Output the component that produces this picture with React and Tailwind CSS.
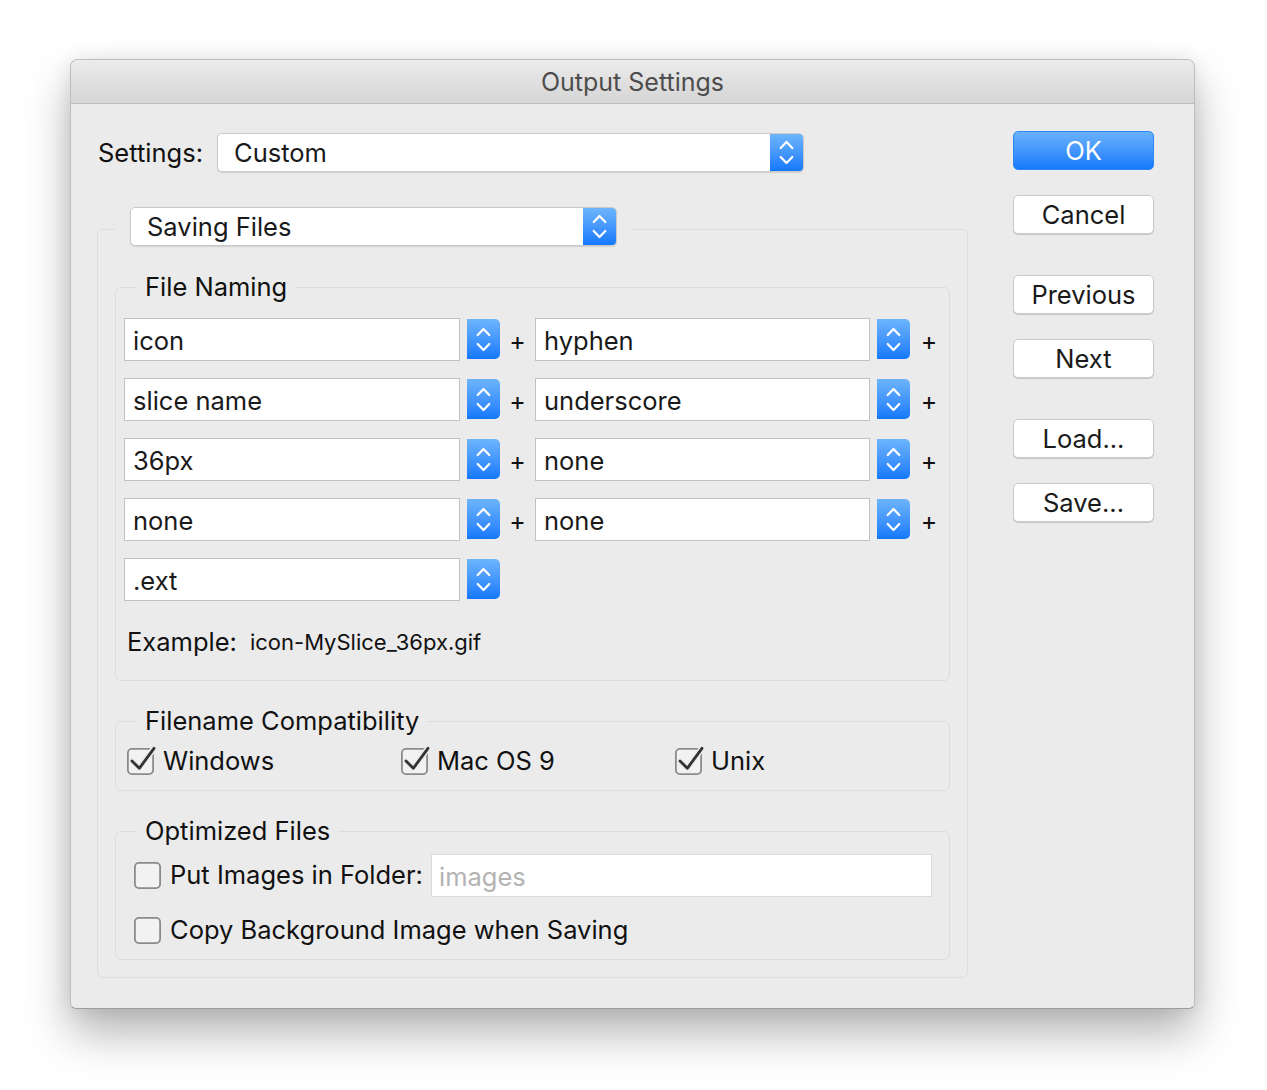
import React from 'react';

function Stepper({ className = '' }) {
  return (
    <div className={`flex items-center justify-center bg-linear-to-b from-[#6db4fb] to-[#1278fb] ${className}`}>
      <svg width="33" height="39" viewBox="0 0 33 39" fill="none">
        <path d="M10.7 15 L16.5 9 L22.3 15" stroke="white" strokeWidth="2.2" strokeLinecap="round" strokeLinejoin="round" />
        <path d="M10.7 24 L16.5 30 L22.3 24" stroke="white" strokeWidth="2.2" strokeLinecap="round" strokeLinejoin="round" />
      </svg>
    </div>
  );
}

function Popup({ label, className = '' }) {
  return (
    <div className={`flex h-[39px] bg-white rounded-[5px] border border-[#cacaca] shadow-[0_1px_1px_rgba(0,0,0,0.12)] overflow-hidden ${className}`}>
      <div className="flex-1 pl-[16px] pt-[2px] flex items-center text-[25.5px] text-[#1a1a1a]">{label}</div>
      <Stepper className="w-[33px] h-full" />
    </div>
  );
}

function Combo({ value, width = 'w-[336px]' }) {
  return (
    <div className="flex items-start h-[43px]">
      <div className={`${width} h-[43px] bg-white border border-[#c2c2c2] pl-[8px] pt-[3px] flex items-center text-[25.5px] text-[#1a1a1a]`}>
        {value}
      </div>
      <Stepper className="ml-[7px] mt-[1px] w-[33px] h-[40px] rounded-r-[5px]" />
    </div>
  );
}

function Checkbox({ checked }) {
  return (
    <svg width="27" height="27" viewBox="0 0 27 27" fill="none" className="flex-none overflow-visible">
      <rect x="0.9" y="0.9" width="25.2" height="25.2" rx="4" fill="#f2f2f2" stroke="#8b8b8b" strokeWidth="1.8" />
      {checked && (
        <>
          <path d="M5 13 L12.3 20.3 L27 0.3" stroke="#ebebeb" strokeWidth="6" strokeLinecap="round" strokeLinejoin="round" />
          <path d="M5 13 L12.3 20.3 L27 0.3" stroke="#333333" strokeWidth="2.8" strokeLinecap="round" strokeLinejoin="round" />
        </>
      )}
    </svg>
  );
}

function Button({ children, primary, className = '' }) {
  return (
    <div
      className={`w-[141px] h-[39px] pt-[2px] rounded-[5px] flex items-center justify-center text-[25.5px] ${
        primary
          ? 'bg-linear-to-b from-[#69b1fa] to-[#1179fb] border border-[#2f86f5] text-white'
          : 'bg-white border border-[#cacaca] shadow-[0_1px_1px_rgba(0,0,0,0.15)] text-[#1a1a1a]'
      } ${className}`}
    >
      {children}
    </div>
  );
}

const naming = [
  ['icon', 'hyphen'],
  ['slice name', 'underscore'],
  ['36px', 'none'],
  ['none', 'none'],
];

export default function App() {
  return (
    <div className="min-h-[1090px] bg-white pl-[70px] pt-[59px] font-['Inter',sans-serif] text-[#111]">
      <div className="w-[1125px] h-[950px] flex flex-col rounded-t-[8px] rounded-b-[6px] border border-[#bdbdbd] border-b-[#9d9d9d] bg-[#ebebeb] overflow-hidden shadow-[0_24px_45px_rgba(0,0,0,0.3),0_0_18px_rgba(0,0,0,0.08)]">
        <div className="h-[44px] flex-none flex items-center justify-center pt-[2px] bg-linear-to-b from-[#ececec] to-[#d5d5d5] border-b border-[#bdbdbd] text-[25px] text-[#4d4d4d]">
          Output Settings
        </div>

        <div className="flex flex-1 pl-[26px] pr-[39px]">
          <div className="w-[871px] pt-[29px]">
            <div className="flex items-center h-[39px]">
              <div className="w-[120px] pl-[1px] pt-[2px] text-[25.5px]">Settings:</div>
              <Popup label="Custom" className="w-[587px]" />
            </div>

            <fieldset className="mt-[35px] border border-[#dcdcdc] rounded-[6px] px-[17px] pt-[21px] pb-[17px]">
              <legend className="px-[15px] pb-[5px]">
                <Popup label="Saving Files" className="w-[487px]" />
              </legend>

              <fieldset className="border border-[#dcdcdc] rounded-[6px] pl-[8px] pt-[16px] pb-[23px]">
                <legend className="ml-[13px] px-[8px] text-[25.5px] leading-[30px]">File Naming</legend>
                <div className="flex flex-col gap-[17px]">
                  {naming.map(([a, b], i) => (
                    <div key={i} className="flex items-center">
                      <Combo value={a} />
                      <div className="w-[35px] pt-[3px] text-center text-[25px] leading-none">+</div>
                      <Combo value={b} width="w-[335px]" />
                      <div className="w-[38px] pt-[3px] text-center text-[25px] leading-none">+</div>
                    </div>
                  ))}
                  <div className="flex">
                    <Combo value=".ext" />
                  </div>
                </div>
                <div className="mt-[26px] h-[30px] flex items-center pl-[3px]">
                  <span className="text-[25.5px]">Example:</span>
                  <span className="ml-[13px] text-[22px]">icon-MySlice_36px.gif</span>
                </div>
              </fieldset>

              <fieldset className="mt-[25px] border border-[#dcdcdc] rounded-[6px] pl-[11px] pt-[10px] pb-[14px]">
                <legend className="ml-[10px] px-[8px] text-[25.5px] leading-[30px]">Filename Compatibility</legend>
                <div className="flex h-[30px] items-center">
                  {['Windows', 'Mac OS 9', 'Unix'].map((l) => (
                    <div key={l} className="w-[274px] flex items-center gap-[9px]">
                      <Checkbox checked />
                      <span className="text-[25.5px]">{l}</span>
                    </div>
                  ))}
                </div>
              </fieldset>

              <fieldset className="mt-[25px] border border-[#dcdcdc] rounded-[6px] pl-[18px] pr-[17px] pt-[8px] pb-[14px]">
                <legend className="ml-[3px] px-[8px] text-[25.5px] leading-[30px]">Optimized Files</legend>
                <div className="flex items-center h-[43px]">
                  <Checkbox />
                  <span className="ml-[9px] text-[25.5px]">Put Images in Folder:</span>
                  <div className="ml-auto w-[501px] h-[43px] bg-white border border-[#dadada] pl-[7px] pt-[3px] flex items-center text-[25.5px] text-[#b3b3b3]">
                    images
                  </div>
                </div>
                <div className="mt-[18px] flex items-center h-[30px]">
                  <Checkbox />
                  <span className="ml-[9px] text-[25.5px]">Copy Background Image when Saving</span>
                </div>
              </fieldset>
            </fieldset>
          </div>

          <div className="ml-[45px] pt-[27px] flex flex-col">
            <Button primary>OK</Button>
            <Button className="mt-[25px]">Cancel</Button>
            <Button className="mt-[41px]">Previous</Button>
            <Button className="mt-[25px]">Next</Button>
            <Button className="mt-[41px]">Load...</Button>
            <Button className="mt-[25px]">Save...</Button>
          </div>
        </div>
      </div>
    </div>
  );
}
